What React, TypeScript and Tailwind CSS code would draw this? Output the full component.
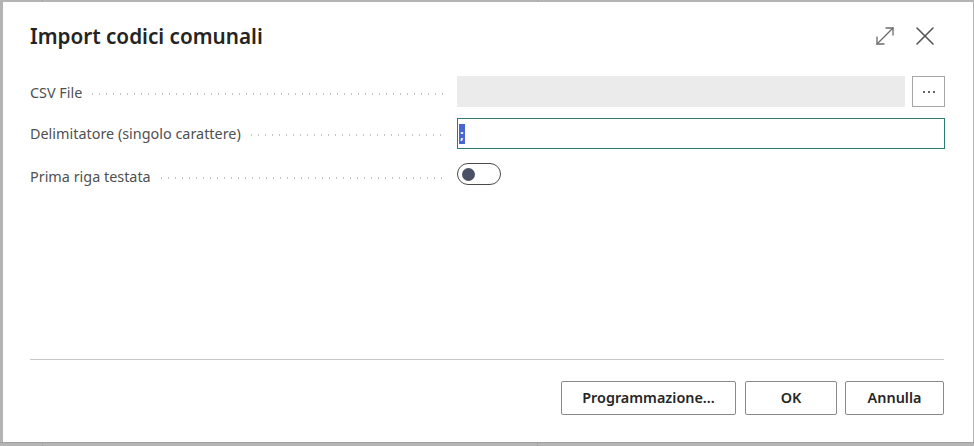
import React from "react";

function Dots() {
  return (
    <div className="flex-1 ml-[7px] mr-[0px] h-[2px] self-center mt-[2px] bg-[radial-gradient(circle,#c4c4c4_0.9px,transparent_1.1px)] bg-[length:7px_2px] bg-repeat-x" />
  );
}

function Label({ text }: { text: string }) {
  return (
    <div className="flex items-center h-full text-[14.4px] text-[#505050]">
      <span className="whitespace-nowrap">{text}</span>
      <Dots />
    </div>
  );
}

export default function App() {
  return (
    <div
      className="w-[974px] h-[446px] bg-[#b4b4b4] relative overflow-hidden"
      style={{ fontFamily: '"Noto Sans", "Open Sans", sans-serif' }}
    >
      {/* backdrop faint content */}
      <div className="absolute left-[42px] top-0 w-px h-full bg-[#a6a6a6]" />
      <div className="absolute left-[537px] top-0 w-px h-full bg-[#a6a6a6]" />
      <div className="absolute left-0 top-[442px] w-full h-px bg-[#a0a0a0]" />

      <div className="absolute left-[3px] top-[2px] w-[970px] h-[440px] bg-white flex flex-col pl-[27px] pr-[28px]">
        {/* header */}
        <div className="flex items-start justify-between pt-[19px] h-[74px]">
          <h1 className="text-[20.7px] font-semibold text-[#242424] leading-[30px]">
            Import codici comunali
          </h1>
          <div className="flex items-center gap-[20px] pt-[5px] pr-[10px]">
            <svg width="20" height="20" viewBox="0 0 20 20" fill="none" stroke="#6b6b6b" strokeWidth="1.3" strokeLinecap="round">
              <path d="M2 18 L18 2" />
              <path d="M11 2 H18 V9" />
              <path d="M2 11 V18 H9" />
            </svg>
            <svg width="20" height="20" viewBox="0 0 20 20" fill="none" stroke="#555" strokeWidth="1.6" strokeLinecap="round">
              <path d="M2 2 L18 18" />
              <path d="M18 2 L2 18" />
            </svg>
          </div>
        </div>

        {/* form */}
        <div className="grid grid-cols-[415px_1fr] gap-x-[12px] gap-y-[11px]">
          <div className="h-[31px] pt-[2px]"><Label text="CSV File" /></div>
          <div className="flex gap-[7px] h-[31px]">
            <div className="flex-1 bg-[#ebebeb]" />
            <button className="w-[33px] h-[31px] border border-[#a6a6a6] flex items-center justify-center gap-[3px] bg-white">
              <span className="w-[2px] h-[2px] rounded-full bg-[#333]" />
              <span className="w-[2px] h-[2px] rounded-full bg-[#333]" />
              <span className="w-[2px] h-[2px] rounded-full bg-[#333]" />
            </button>
          </div>

          <div className="h-[31px]"><Label text="Delimitatore (singolo carattere)" /></div>
          <div className="h-[31px] border border-[#2e7b76] flex items-center pl-[1px]">
            <span className="bg-[#4a66d4] text-white text-[13px] leading-[20px] h-[20px] px-[1px] font-bold">;</span>
          </div>

          <div className="h-[24px] mt-[5px]"><Label text="Prima riga testata" /></div>
          <div className="h-[24px] mt-[2px] flex items-center">
            <div className="w-[44px] h-[22px] rounded-full border border-[#4b4b4b] flex items-center pl-[4px]">
              <div className="w-[13px] h-[13px] rounded-full bg-[#4a5166]" />
            </div>
          </div>
        </div>

        <div className="flex-1" />

        {/* footer */}
        <div className="border-t border-[#c8c8c8] mr-[1px] pt-[21px] pb-[27px] flex justify-end gap-[8px]">
          <button className="h-[34px] w-[175px] border border-[#8a8a8a] rounded-[2px] text-[14.4px] font-semibold text-[#262626]">
            Programmazione...
          </button>
          <button className="h-[34px] w-[92px] ml-[1px] border border-[#8a8a8a] rounded-[2px] text-[14.4px] font-semibold text-[#262626]">
            OK
          </button>
          <button className="h-[34px] w-[99px] border border-[#8a8a8a] rounded-[2px] text-[14.4px] font-semibold text-[#262626]">
            Annulla
          </button>
        </div>
      </div>
    </div>
  );
}
